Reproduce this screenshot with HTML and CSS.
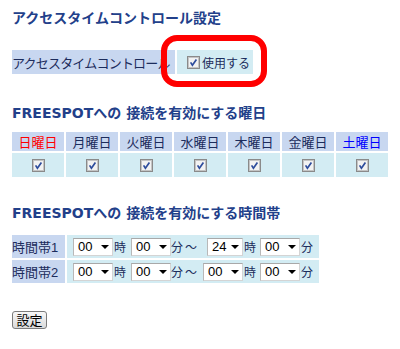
FILE: index.html
```html
<!DOCTYPE html>
<html lang="ja">
<head>
  <meta charset="UTF-8">
  <title>アクセスタイムコントロール設定</title>
  <link rel="stylesheet" href="styles.css">
</head>
<body>
  <div class="page">
    <h1 class="heading title">アクセスタイムコントロール設定</h1>

    <table class="form-table acl-table">
      <tr>
        <th class="label acl-label">アクセスタイムコントロール</th>
        <td class="value acl-value">
          <label class="check-label">
            <span class="check"><svg width="13" height="13" viewBox="0 0 13 13"><rect x="0.5" y="0.5" width="12" height="12" fill="#f2f2f2" stroke="#8a8a8a"/><rect x="1.5" y="1.5" width="10" height="10" fill="none" stroke="#c4c4c4"/><path d="M3.6 6.4 L5.4 9.2 L9.4 3.4" fill="none" stroke="#2d4c9c" stroke-width="1.7"/></svg></span>使用する
          </label>
          <div class="highlight"></div>
        </td>
      </tr>
    </table>

    <h2 class="heading days-heading">FREESPOTへの 接続を有効にする曜日</h2>

    <table class="form-table day-table">
      <tr>
        <th class="label day sun">日曜日</th>
        <th class="label day">月曜日</th>
        <th class="label day">火曜日</th>
        <th class="label day">水曜日</th>
        <th class="label day">木曜日</th>
        <th class="label day">金曜日</th>
        <th class="label day sat">土曜日</th>
      </tr>
      <tr>
        <td class="value day-check"><span class="check"><svg width="13" height="13" viewBox="0 0 13 13"><rect x="0.5" y="0.5" width="12" height="12" fill="#f2f2f2" stroke="#8a8a8a"/><rect x="1.5" y="1.5" width="10" height="10" fill="none" stroke="#c4c4c4"/><path d="M3.6 6.4 L5.4 9.2 L9.4 3.4" fill="none" stroke="#2d4c9c" stroke-width="1.7"/></svg></span></td>
        <td class="value day-check"><span class="check"><svg width="13" height="13" viewBox="0 0 13 13"><rect x="0.5" y="0.5" width="12" height="12" fill="#f2f2f2" stroke="#8a8a8a"/><rect x="1.5" y="1.5" width="10" height="10" fill="none" stroke="#c4c4c4"/><path d="M3.6 6.4 L5.4 9.2 L9.4 3.4" fill="none" stroke="#2d4c9c" stroke-width="1.7"/></svg></span></td>
        <td class="value day-check"><span class="check"><svg width="13" height="13" viewBox="0 0 13 13"><rect x="0.5" y="0.5" width="12" height="12" fill="#f2f2f2" stroke="#8a8a8a"/><rect x="1.5" y="1.5" width="10" height="10" fill="none" stroke="#c4c4c4"/><path d="M3.6 6.4 L5.4 9.2 L9.4 3.4" fill="none" stroke="#2d4c9c" stroke-width="1.7"/></svg></span></td>
        <td class="value day-check"><span class="check"><svg width="13" height="13" viewBox="0 0 13 13"><rect x="0.5" y="0.5" width="12" height="12" fill="#f2f2f2" stroke="#8a8a8a"/><rect x="1.5" y="1.5" width="10" height="10" fill="none" stroke="#c4c4c4"/><path d="M3.6 6.4 L5.4 9.2 L9.4 3.4" fill="none" stroke="#2d4c9c" stroke-width="1.7"/></svg></span></td>
        <td class="value day-check"><span class="check"><svg width="13" height="13" viewBox="0 0 13 13"><rect x="0.5" y="0.5" width="12" height="12" fill="#f2f2f2" stroke="#8a8a8a"/><rect x="1.5" y="1.5" width="10" height="10" fill="none" stroke="#c4c4c4"/><path d="M3.6 6.4 L5.4 9.2 L9.4 3.4" fill="none" stroke="#2d4c9c" stroke-width="1.7"/></svg></span></td>
        <td class="value day-check"><span class="check"><svg width="13" height="13" viewBox="0 0 13 13"><rect x="0.5" y="0.5" width="12" height="12" fill="#f2f2f2" stroke="#8a8a8a"/><rect x="1.5" y="1.5" width="10" height="10" fill="none" stroke="#c4c4c4"/><path d="M3.6 6.4 L5.4 9.2 L9.4 3.4" fill="none" stroke="#2d4c9c" stroke-width="1.7"/></svg></span></td>
        <td class="value day-check"><span class="check"><svg width="13" height="13" viewBox="0 0 13 13"><rect x="0.5" y="0.5" width="12" height="12" fill="#f2f2f2" stroke="#8a8a8a"/><rect x="1.5" y="1.5" width="10" height="10" fill="none" stroke="#c4c4c4"/><path d="M3.6 6.4 L5.4 9.2 L9.4 3.4" fill="none" stroke="#2d4c9c" stroke-width="1.7"/></svg></span></td>
      </tr>
    </table>

    <h2 class="heading time-heading">FREESPOTへの 接続を有効にする時間帯</h2>

    <table class="form-table time-table">
      <tr>
        <th class="label time-label">時間帯1</th>
        <td class="value time-value">
          <div class="time-row">
            <span class="select sel-1"><span>00</span><span class="arrow"></span></span>
            <span class="unit u-hour">時</span>
            <span class="select sel-2"><span>00</span><span class="arrow"></span></span>
            <span class="unit">分</span>
            <span class="unit tilde">～</span>
            <span class="select sel-3 narrow"><span>24</span><span class="arrow"></span></span>
            <span class="unit u-hour">時</span>
            <span class="select sel-4"><span>00</span><span class="arrow"></span></span>
            <span class="unit u-min">分</span>
          </div>
        </td>
      </tr>
      <tr>
        <th class="label time-label">時間帯2</th>
        <td class="value time-value">
          <div class="time-row">
            <span class="select sel-1"><span>00</span><span class="arrow"></span></span>
            <span class="unit u-hour">時</span>
            <span class="select sel-2"><span>00</span><span class="arrow"></span></span>
            <span class="unit">分</span>
            <span class="unit tilde">～</span>
            <span class="select sel-3"><span>00</span><span class="arrow"></span></span>
            <span class="unit u-hour">時</span>
            <span class="select sel-4"><span>00</span><span class="arrow"></span></span>
            <span class="unit u-min">分</span>
          </div>
        </td>
      </tr>
    </table>

    <button class="submit">設定</button>
  </div>
</body>
</html>
```

FILE: styles.css
```css
body {
  margin: 0;
  font-family: "Liberation Sans", "Noto Sans CJK JP", sans-serif;
  background-color: #fff;
  color: #1c2c5c;
}

.page {
  padding: 8px 10px 0 10px;
}

.heading {
  margin: 0;
  padding-left: 2px;
  font-family: "DejaVu Sans", "Noto Sans CJK JP", sans-serif;
  font-size: 14px;
  line-height: 20px;
  font-weight: bold;
  color: #22408a;
}

.days-heading {
  margin-top: 27px;
}

.time-heading {
  margin-top: 24px;
}

.form-table {
  border-collapse: separate;
  border-spacing: 2px;
}

.form-table th,
.form-table td {
  padding: 0;
  vertical-align: middle;
}

.label {
  background-color: #c8d7f0;
  font-weight: normal;
  font-size: 13px;
  text-align: left;
  color: #1c2c5c;
}

.value {
  background-color: #d3ecf3;
  font-size: 12px;
}

/* access time control row */
.acl-table {
  margin-top: 20px;
}

.acl-label {
  width: 163px;
  height: 24px;
  padding-left: 5px;
  letter-spacing: -0.8px;
  white-space: nowrap;
}

.acl-value {
  width: 76px;
  position: relative;
}

.check-label {
  display: flex;
  align-items: center;
  padding-left: 10px;
  color: #1c2c5c;
}

.check {
  display: inline-flex;
  width: 13px;
  height: 13px;
  margin-right: 2px;
}

.highlight {
  position: absolute;
  left: -16px;
  top: -15px;
  width: 106px;
  height: 52px;
  box-sizing: border-box;
  border: 6px solid #ff0000;
  border-radius: 16px;
}

/* weekdays */
.day-table {
  margin-top: 7px;
}

.day {
  width: 52px;
  height: 19px;
  text-align: center;
  font-size: 13px;
}

.day.sun {
  color: #ff0000;
}

.day.sat {
  color: #0000ff;
}

.day-check {
  height: 24px;
  text-align: center;
}

.day-check .check {
  margin: 0;
  vertical-align: middle;
}

/* time ranges */
.time-table {
  margin-top: 10px;
}

.time-label {
  width: 53px;
  height: 23px;
  padding-left: 5px;
}

.time-value {
  width: 252px;
}

.time-row {
  display: flex;
  align-items: center;
  padding-left: 6px;
}

.select {
  display: inline-flex;
  align-items: center;
  justify-content: space-between;
  box-sizing: border-box;
  width: 40px;
  height: 18px;
  padding: 0 3px 0 4px;
  background-color: #fff;
  border: 1px solid #d4d4d4;
  border-top-color: #a8a8a8;
  border-left-color: #b8b8b8;
  font-size: 13px;
  color: #000;
}

.select.narrow {
  width: 36px;
  margin-left: 10px;
}

.arrow {
  width: 0;
  height: 0;
  border-left: 4px solid transparent;
  border-right: 4px solid transparent;
  border-top: 4px solid #000;
}

.unit {
  font-size: 12px;
  color: #1c2c5c;
}

.u-hour {
  margin-left: 1px;
}

.sel-2 {
  margin-left: 5px;
}

.tilde {
  margin-left: 2px;
}

.sel-3 {
  margin-left: 6px;
}

.sel-4 {
  margin-left: 4px;
}

.u-min {
  margin-left: 1px;
}

.submit {
  display: block;
  margin: 26px 0 0 2px;
  width: 35px;
  height: 18px;
  padding: 0;
  font-family: "Noto Sans CJK JP", sans-serif;
  font-size: 13px;
  line-height: 16px;
  color: #000;
  background: linear-gradient(#f8f8f8, #dadada);
  border: 1px solid #7c7c7c;
  border-radius: 3px;
}
```
